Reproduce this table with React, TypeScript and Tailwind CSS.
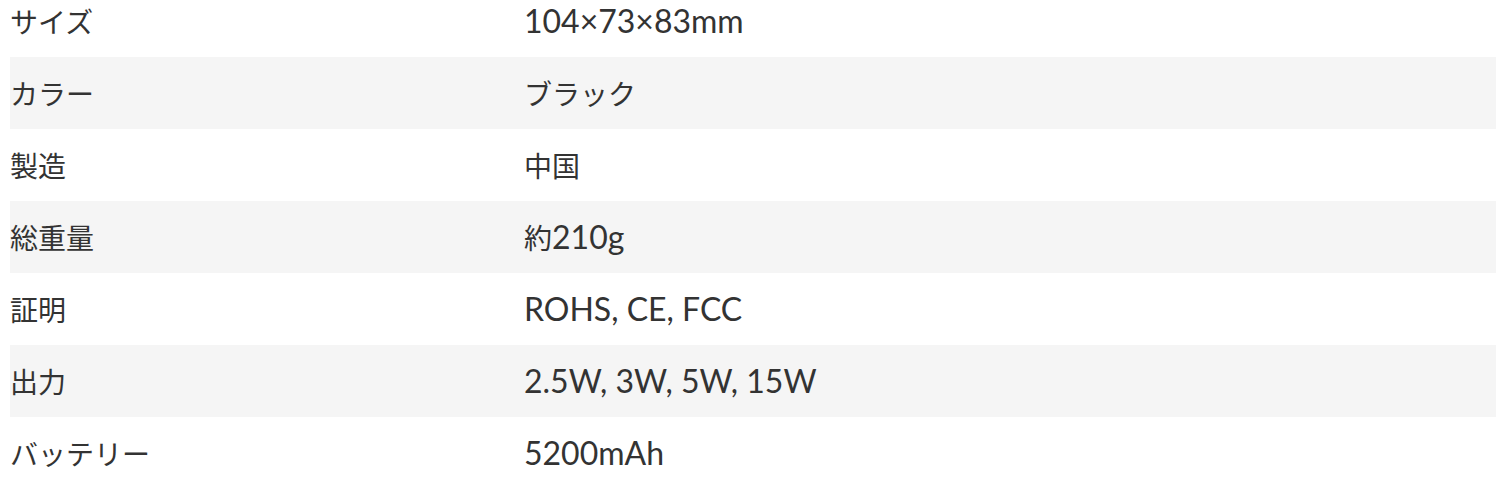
const specs = [
  { label: "サイズ", value: "104×73×83mm" },
  { label: "カラー", value: "ブラック" },
  { label: "製造", value: "中国" },
  { label: "総重量", value: "約210g" },
  { label: "証明", value: "ROHS, CE, FCC" },
  { label: "出力", value: "2.5W, 3W, 5W, 15W" },
  { label: "バッテリー", value: "5200mAh" },
];

// latin text is set larger than the japanese fallback
const Mixed = ({ text }: { text: string }) => (
  <span>
    {text.split(/([\u3000-\u9fff\uff00-\uffef]+)/).map((part, i) =>
      /[\u3000-\u9fff\uff00-\uffef]/.test(part) ? (
        <span key={i} className="text-[28px]">
          {part}
        </span>
      ) : (
        <span key={i}>{part}</span>
      )
    )}
  </span>
);

export default function App() {
  return (
    <div className="w-[1506px] h-[486px] overflow-hidden bg-white">
      <div
        className="mx-[10px] mt-[-15px] text-[32px] text-[#333333]"
        style={{ fontFamily: 'Lato, "Noto Sans CJK JP", sans-serif' }}
      >
        {specs.map((row, i) => (
          <div
            key={row.label}
            className={`grid grid-cols-[514px_1fr] h-[72px] items-center leading-none ${i % 2 === 1 ? "bg-[#f5f5f5]" : ""}`}
          >
            <Mixed text={row.label} />
            <Mixed text={row.value} />
          </div>
        ))}
      </div>
    </div>
  );
}
